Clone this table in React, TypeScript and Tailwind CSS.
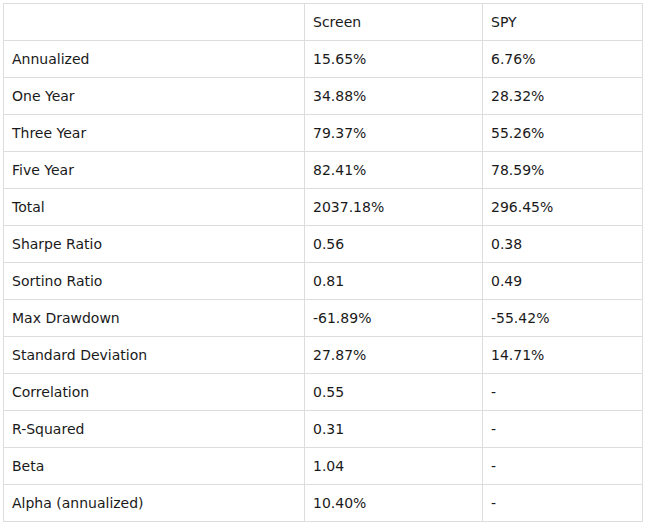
const rows: [string, string, string][] = [
  ["Annualized", "15.65%", "6.76%"],
  ["One Year", "34.88%", "28.32%"],
  ["Three Year", "79.37%", "55.26%"],
  ["Five Year", "82.41%", "78.59%"],
  ["Total", "2037.18%", "296.45%"],
  ["Sharpe Ratio", "0.56", "0.38"],
  ["Sortino Ratio", "0.81", "0.49"],
  ["Max Drawdown", "-61.89%", "-55.42%"],
  ["Standard Deviation", "27.87%", "14.71%"],
  ["Correlation", "0.55", "-"],
  ["R-Squared", "0.31", "-"],
  ["Beta", "1.04", "-"],
  ["Alpha (annualized)", "10.40%", "-"],
]

const cell = "border border-[#dddddd] px-2 py-2 text-left font-normal leading-5 align-middle"

const App = () => {
  return (
    <div className="bg-white pl-[3px] pt-[3px] w-[646px] h-[526px] text-[14px] text-[#1a1a1a] [font-family:'DejaVu_Sans',Verdana,sans-serif]">
      <table className="border-collapse table-fixed w-[640px]">
        <colgroup>
          <col className="w-[301px]" />
          <col className="w-[178px]" />
          <col className="w-[160px]" />
        </colgroup>
        <thead>
          <tr>
            <th className={cell}></th>
            <th className={cell}>Screen</th>
            <th className={cell}>SPY</th>
          </tr>
        </thead>
        <tbody>
          {rows.map((r) => (
            <tr key={r[0]}>
              <td className={cell}>{r[0]}</td>
              <td className={cell}>{r[1]}</td>
              <td className={cell}>{r[2]}</td>
            </tr>
          ))}
        </tbody>
      </table>
    </div>
  )
}

export default App
